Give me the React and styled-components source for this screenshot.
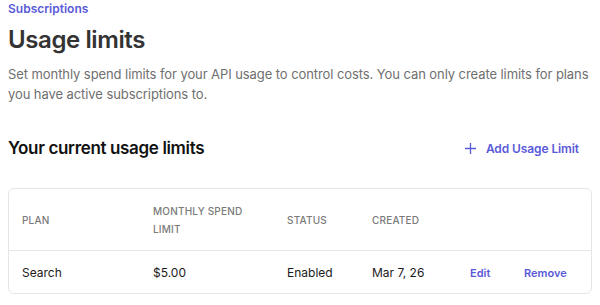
import React from "react";
import styled, { createGlobalStyle } from "styled-components";

const GlobalStyle = createGlobalStyle`
  body {
    margin: 0;
    background: #ffffff;
    font-family: Inter, "Noto Sans", sans-serif;
  }
`;

const limits = [
  { plan: "Search", limit: "$5.00", status: "Enabled", created: "Mar 7, 26" },
];

function App() {
  return (
    <Page>
      <GlobalStyle />
      <Crumb>Subscriptions</Crumb>
      <Title>Usage limits</Title>
      <Lead>
        Set monthly spend limits for your API usage to control costs. You can
        only create limits for plans you have active subscriptions to.
      </Lead>
      <SectionHeader>
        <SectionTitle>Your current usage limits</SectionTitle>
        <AddButton>
          <svg width="11" height="11" viewBox="0 0 11 11" fill="none">
            <path d="M5.5 0v11M0 5.5h11" stroke="currentColor" strokeWidth="1.3" />
          </svg>
          Add Usage Limit
        </AddButton>
      </SectionHeader>
      <Card>
        <HeadRow>
          <HeadCell>Plan</HeadCell>
          <HeadCell>Monthly spend limit</HeadCell>
          <HeadCell>Status</HeadCell>
          <HeadCell>Created</HeadCell>
          <HeadCell />
          <HeadCell />
        </HeadRow>
        {limits.map((row) => (
          <BodyRow key={row.plan}>
            <Cell>{row.plan}</Cell>
            <Cell>{row.limit}</Cell>
            <Cell>{row.status}</Cell>
            <Cell>{row.created}</Cell>
            <Cell>
              <Action>Edit</Action>
            </Cell>
            <Cell>
              <Action>Remove</Action>
            </Cell>
          </BodyRow>
        ))}
      </Card>
    </Page>
  );
}

const Page = styled.div`
  padding: 1px 8px 0;
`;

const Crumb = styled.div`
  font-size: 12px;
  font-weight: 600;
  color: #5a5ad8;
  line-height: 16px;
`;

const Title = styled.h1`
  margin: 7px 0 0;
  font-size: 24px;
  font-weight: 600;
  color: #333333;
  line-height: 32px;
  letter-spacing: -0.4px;
`;

const Lead = styled.p`
  margin: 8px 0 0;
  font-size: 13px;
  color: #6f6f6f;
  line-height: 20px;
  letter-spacing: -0.08px;
`;

const SectionHeader = styled.div`
  display: flex;
  justify-content: space-between;
  align-items: center;
  margin-top: 31px;
`;

const SectionTitle = styled.h2`
  margin: 0;
  font-size: 17px;
  font-weight: 600;
  color: #111111;
  line-height: 26px;
  letter-spacing: -0.35px;
`;

const AddButton = styled.button`
  display: flex;
  align-items: center;
  gap: 10px;
  margin-right: 13px;
  padding: 0;
  border: none;
  background: none;
  font-family: inherit;
  font-size: 12px;
  font-weight: 600;
  color: #5a5ad8;
  letter-spacing: -0.1px;
  cursor: pointer;
`;

const Card = styled.div`
  margin-top: 27px;
  border: 1px solid #e6e6e6;
  border-radius: 6px;
  overflow: hidden;
`;

const Row = styled.div`
  display: grid;
  grid-template-columns: 131px 134px 85px 98px 54px 1fr;
  align-items: center;
`;

const HeadRow = styled(Row)`
  height: 61px;
  border-bottom: 1px solid #e6e6e6;
`;

const BodyRow = styled(Row)`
  height: 42px;
`;

const HeadCell = styled.div`
  padding: 0 14px 0 13px;
  font-size: 10px;
  font-weight: 500;
  text-transform: uppercase;
  color: #7a7a7a;
  line-height: 18px;
  letter-spacing: 0.2px;
`;

const Cell = styled.div`
  padding: 0 14px 0 13px;
  font-size: 12px;
  color: #1a1a1a;
`;

const Action = styled.span`
  font-size: 11px;
  font-weight: 600;
  color: #5a5ad8;
  cursor: pointer;
`;

export default App;
